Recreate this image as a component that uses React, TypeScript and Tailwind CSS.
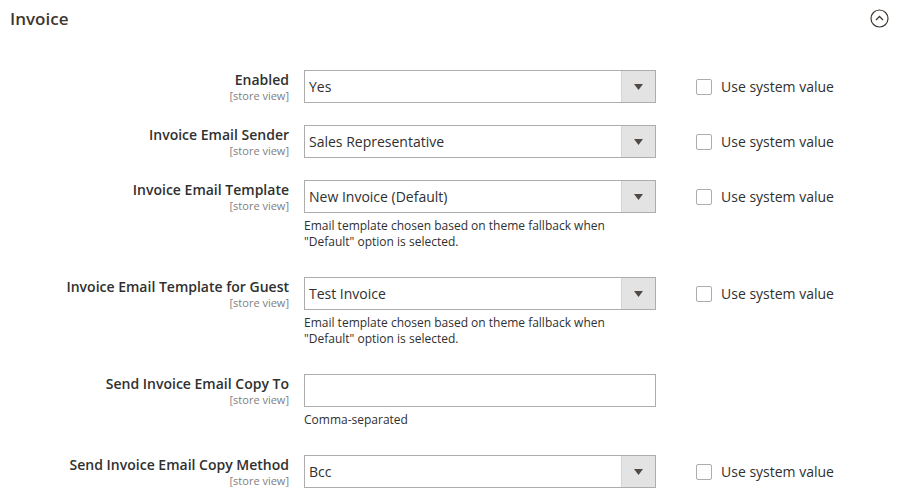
import React from "react";

type Row = {
  label: string;
  value?: string;
  kind: "select" | "text";
  note?: string[];
  system?: boolean;
};

const rows: Row[] = [
  { label: "Enabled", value: "Yes", kind: "select", system: true },
  { label: "Invoice Email Sender", value: "Sales Representative", kind: "select", system: true },
  {
    label: "Invoice Email Template",
    value: "New Invoice (Default)",
    kind: "select",
    system: true,
    note: ["Email template chosen based on theme fallback when", "\"Default\" option is selected."],
  },
  {
    label: "Invoice Email Template for Guest",
    value: "Test Invoice",
    kind: "select",
    system: true,
    note: ["Email template chosen based on theme fallback when", "\"Default\" option is selected."],
  },
  { label: "Send Invoice Email Copy To", kind: "text", note: ["Comma-separated"] },
  { label: "Send Invoice Email Copy Method", value: "Bcc", kind: "select", system: true },
];

function Field({ row }: { row: Row }) {
  return (
    <div className={`flex items-start ${row.note ? "mb-[27px]" : "mb-[22px]"}`}>
      <div className="w-[289px] shrink-0 text-right">
        <div className="text-[14px] leading-[18px] pt-[1px] font-semibold text-[#303030]">{row.label}</div>
        <div className="text-[11px] leading-[13px] text-[#808080]">[store view]</div>
      </div>
      <div className="ml-[15px] w-[352px] shrink-0">
        {row.kind === "select" ? (
          <div className="flex h-[33px] border border-[#adadad] bg-white">
            <div className="flex-1 pl-[4px] text-[14px] leading-[31px] text-[#303030]">{row.value}</div>
            <div className="w-[34px] flex items-center justify-center bg-[#e3e3e3] border-l border-[#d6d6d6]">
              <svg width="9" height="6" viewBox="0 0 9 6">
                <path d="M0 0h9L4.5 6z" fill="#514943" />
              </svg>
            </div>
          </div>
        ) : (
          <div className="h-[33px] border border-[#adadad] bg-white" />
        )}
        {row.note && (
          <div className="mt-[5px] text-[12px] leading-[16px] text-[#303030]">
            {row.note.map((l) => (
              <div key={l}>{l}</div>
            ))}
          </div>
        )}
      </div>
      {row.system && (
        <div className="ml-[40px] flex items-center h-[33px]">
          <span className="w-[16px] h-[16px] border border-[#adadad] rounded-[2px] bg-white mt-[1px]" />
          <span className="ml-[9px] text-[14px] text-[#303030]">Use system value</span>
        </div>
      )}
    </div>
  );
}

export default function App() {
  return (
    <div
      className="w-[900px] h-[492px] bg-white overflow-hidden"
      style={{ fontFamily: '"Open Sans", "Noto Sans", sans-serif' }}
    >
      <div className="flex items-center justify-between pl-[10px] pr-[11px] pt-[6px] h-[31px]">
        <h2 className="text-[17px] font-semibold text-[#41362f] leading-[24px]">Invoice</h2>
        <svg width="19" height="19" viewBox="0 0 19 19">
          <circle cx="9.5" cy="9.5" r="8.5" fill="none" stroke="#41362f" strokeWidth="1.2" />
          <path d="M6 11l3.5-3.5L13 11" fill="none" stroke="#41362f" strokeWidth="1.3" />
        </svg>
      </div>
      <div className="pt-[39px]">
        {rows.map((r) => (
          <Field key={r.label} row={r} />
        ))}
      </div>
    </div>
  );
}
